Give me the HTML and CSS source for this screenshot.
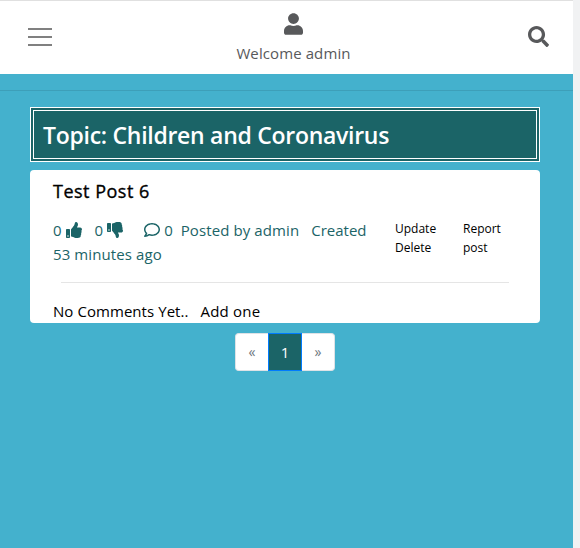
FILE: index.html
```html
<!DOCTYPE html>
<html lang="en">
<head>
<meta charset="utf-8">
<title>Topic</title>
<link rel="stylesheet" href="styles.css">
</head>
<body>
<div class="page">
  <header class="navbar">
    <div class="menu"><span></span><span></span><span></span></div>
    <div class="user">
      <svg viewBox="0 0 448 512"><path d="M224 256c70.7 0 128-57.3 128-128S294.7 0 224 0 96 57.3 96 128s57.3 128 128 128zm89.6 32h-16.7c-22.2 10.2-46.9 16-72.9 16s-50.6-5.8-72.9-16h-16.7C60.2 288 0 348.2 0 422.4V464c0 26.5 21.5 48 48 48h352c26.5 0 48-21.5 48-48v-41.6c0-74.2-60.2-134.4-134.4-134.4z"/></svg>
      <span class="welcome">Welcome admin</span>
    </div>
    <svg class="search" viewBox="0 0 512 512"><path d="M505 442.7L405.3 343c-4.5-4.5-10.6-7-17-7H372c27.6-35.3 44-79.7 44-128C416 93.1 322.9 0 208 0S0 93.1 0 208s93.1 208 208 208c48.3 0 92.7-16.4 128-44v16.3c0 6.4 2.5 12.5 7 17l99.7 99.7c9.4 9.4 24.6 9.4 33.9 0l28.3-28.3c9.4-9.4 9.4-24.6.1-34zM208 336c-70.7 0-128-57.2-128-128 0-70.7 57.2-128 128-128 70.7 0 128 57.2 128 128 0 70.7-57.2 128-128 128z"/></svg>
  </header>
  <hr class="rule">
  <main class="content">
    <h1 class="topic"><span>Topic: Children and Coronavirus</span></h1>
    <article class="card">
      <h2 class="title"><span>Test Post 6</span></h2>
      <div class="details">
        <div class="meta">
          <div class="line">
            <span class="vote"><span>0</span><svg viewBox="0 0 512 512"><path d="M104 224H24c-13.255 0-24 10.745-24 24v240c0 13.255 10.745 24 24 24h80c13.255 0 24-10.745 24-24V248c0-13.255-10.745-24-24-24zM64 472c-13.255 0-24-10.745-24-24s10.745-24 24-24 24 10.745 24 24-10.745 24-24 24zM384 81.452c0 42.416-25.97 66.208-33.277 94.548h101.723c33.397 0 59.397 27.746 59.553 58.098.084 17.938-7.546 37.249-19.439 49.197l-.11.11c9.836 23.337 8.237 56.037-9.308 79.469 8.681 25.895-.069 57.704-16.382 74.757 4.298 17.598 2.244 32.575-6.148 44.632C440.202 511.587 389.616 512 346.839 512l-2.845-.001c-48.287-.017-87.806-17.598-119.56-31.725-15.957-7.099-36.821-15.887-52.651-16.178-6.54-.12-11.783-5.457-11.783-11.998v-213.77c0-3.2 1.282-6.271 3.558-8.521 39.614-39.144 56.648-80.587 89.117-113.111 14.804-14.832 20.188-37.236 25.393-58.902C282.515 39.293 291.817 0 312 0c24 0 72 8 72 81.452z"/></svg></span>
            <span class="vote down"><span>0</span><svg viewBox="0 0 512 512"><path d="M0 56v240c0 13.255 10.745 24 24 24h80c13.255 0 24-10.745 24-24V56c0-13.255-10.745-24-24-24H24C10.745 32 0 42.745 0 56zm40 200c0-13.255 10.745-24 24-24s24 10.745 24 24-10.745 24-24 24-24-10.745-24-24zm272 256c-20.183 0-29.485-39.293-33.931-57.795-5.206-21.666-10.589-44.07-25.393-58.902-32.469-32.524-49.503-73.967-89.117-113.111a11.98 11.98 0 0 1-3.558-8.521V59.901c0-6.541 5.243-11.878 11.783-11.998 15.831-.29 36.694-9.079 52.651-16.178C256.189 17.598 295.709.017 343.995 0h2.844c42.777 0 93.363.413 113.774 29.737 8.392 12.057 10.446 27.034 6.148 44.632 16.312 17.053 25.063 48.863 16.382 74.757 17.544 23.432 19.143 56.132 9.308 79.469l.11.11c11.893 11.949 19.523 31.259 19.439 49.197-.156 30.352-26.157 58.098-59.553 58.098H350.723C358.03 364.34 384 388.132 384 430.548 384 504 336 512 312 512z"/></svg></span>
            <span class="replies"><svg viewBox="0 0 512 512"><path d="M256 32C114.6 32 0 125.1 0 240c0 47.6 19.9 91.2 52.9 126.3C38 405.7 7 439.1 6.5 439.5c-6.6 7-8.4 17.2-4.6 26S14.4 480 24 480c61.5 0 110-25.7 139.1-46.3C192 442.8 223.2 448 256 448c141.4 0 256-93.1 256-208S397.4 32 256 32zm0 368c-26.7 0-53.1-4.1-78.4-12.1l-22.7-7.2-19.5 13.8c-14.3 10.1-33.9 21.4-57.5 29 7.3-12.1 14.4-25.7 19.9-40.2l10.6-28.1-20.6-21.8C69.7 314.1 48 282.2 48 240c0-88.2 93.3-160 208-160s208 71.8 208 160-93.3 160-208 160z"/></svg><span>0</span></span>
            <span class="author">Posted by admin</span>
            <span class="created">Created</span>
          </div>
          <div class="line"><span class="age">53 minutes ago</span></div>
        </div>
        <div class="actions"><span class="update">Update</span><span class="delete">Delete</span></div>
        <div class="actions"><span class="report">Report</span><span class="post">post</span></div>
      </div>
      <hr class="divider">
      <div class="comments"><span class="none">No Comments Yet..</span><span class="add">Add one</span></div>
    </article>
    <nav class="pagination"><span class="step">«</span><span class="current">1</span><span class="step">»</span></nav>
  </main>
</div>
</body>
</html>
```
FILE: styles.css
```css
* { box-sizing: border-box; }
body {
  margin: 0;
  height: 548px;
  overflow: hidden;
  background: #f1f2f3;
  font: 15px/24px "Open Sans", "Noto Sans", sans-serif;
  color: #000;
}
svg { display: block; fill: currentColor; }
span { white-space: nowrap; }
.page { width: 573px; height: 548px; background: #44b1cd; }
.navbar {
  height: 74px;
  padding: 0 24px 0 28px;
  display: grid;
  grid-template-columns: 24px 1fr 21px;
  background: #fff;
  border-top: 1px solid #e0e0e0;
  color: #58595b;
}
.menu { display: flex; flex-direction: column; gap: 6px; padding-top: 27px; }
.menu span { height: 2px; background: #808080; }
.user { display: flex; flex-direction: column; align-items: center; padding: 12px 0 0 7px; }
.user svg { width: 19px; height: 22px; }
.welcome { margin-top: 6px; letter-spacing: 0.1px; }
.search { width: 21px; height: 21px; margin-top: 25px; }
.rule { margin: 16px 0; height: 1px; border: 0; background: #3d9fb9; }
.content { padding: 0 33px 0 30px; }
.topic {
  margin: 0 0 8px;
  height: 55px;
  padding: 0 9px;
  border: 4px double #fff;
  background: #1b6467;
  color: #fff;
  font-size: 23px;
  font-weight: 600;
  line-height: 49px;
  letter-spacing: -0.28px;
}
.card { height: 153px; padding: 9px 23px 0; background: #fff; border-radius: 4px; }
.title {
  margin: 0;
  font-size: 18px;
  font-weight: 500;
  line-height: 24px;
  letter-spacing: 0.5px;
  -webkit-text-stroke: 0.35px #000;
}
.details {
  display: grid;
  grid-template-columns: 342px 68px 1fr;
  margin-top: 15px;
  color: #1b6467;
}
.line { display: flex; height: 24px; }
.vote, .replies { display: flex; gap: 4px; }
.line svg { width: 16px; height: 16px; margin-top: 4px; }
.down { margin-left: 13px; }
.replies { margin-left: 21px; }
.author { margin-left: 8px; letter-spacing: 0.1px; }
.created { margin-left: 12px; }
.age { letter-spacing: 0.1px; }
.actions {
  display: flex;
  flex-direction: column;
  padding-top: 1px;
  font-size: 12px;
  line-height: 19px;
  color: #000;
}
.divider { margin: 16px 8px 16px 8px; height: 1px; border: 0; background: #e5e5e5; }
.comments { display: flex; gap: 12px; letter-spacing: 0.06px; }
.add { letter-spacing: 0.2px; }
.pagination { display: flex; width: 100px; height: 38px; margin: 10px auto 0 205px; line-height: 36px; text-align: center; }
.step { width: 33px; background: #fff; border: 1px solid #dee2e6; color: #6c757d; font-size: 14px; }
.step:first-child { border-right: 0; border-radius: 4px 0 0 4px; }
.step:last-child { border-left: 0; border-radius: 0 4px 4px 0; }
.current { width: 34px; background: #1b6467; border: 1px solid #007bff; color: #fff; }
```
